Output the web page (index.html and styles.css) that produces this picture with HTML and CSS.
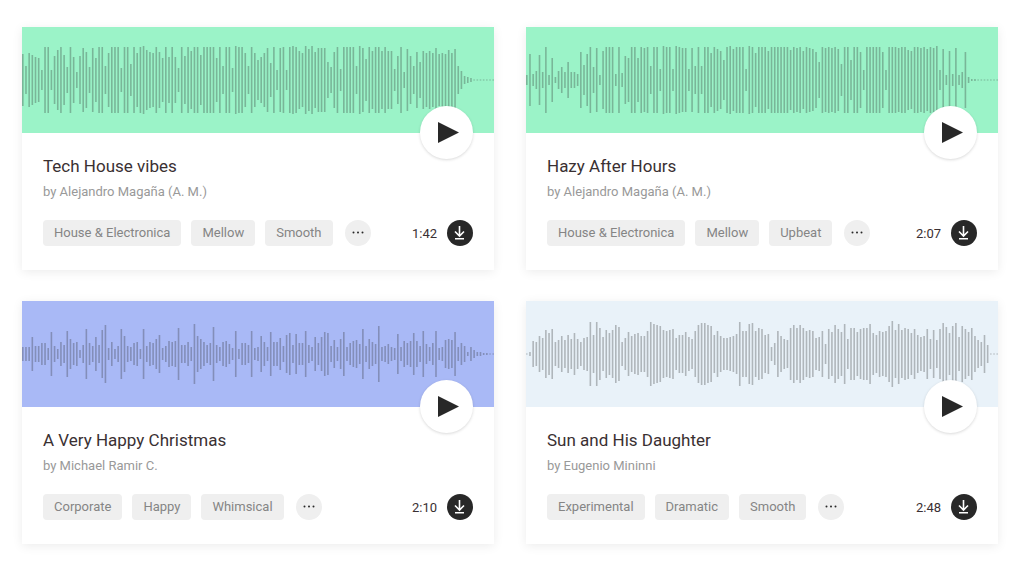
FILE: index.html
```html
<!DOCTYPE html>
<html lang="en">
<head>
    <meta charset="UTF-8">
    <meta name="viewport" content="width=device-width, initial-scale=1.0">
    <title>Free Stock Music</title>
    <link rel="stylesheet" href="styles.css">
</head>
<body>
    <svg width="0" height="0" class="icon-defs" aria-hidden="true">
        <symbol id="icon-play" viewBox="0 0 21 21">
            <path d="M0 0 L21 10.5 L0 21 Z" fill="currentColor"/>
        </symbol>
        <symbol id="icon-more" viewBox="0 0 26 26">
            <circle cx="8.5" cy="12.5" r="1" fill="currentColor"/>
            <circle cx="13" cy="12.5" r="1" fill="currentColor"/>
            <circle cx="17.5" cy="12.5" r="1" fill="currentColor"/>
        </symbol>
        <symbol id="icon-download" viewBox="0 0 26 26">
            <path d="M12.5 6 V15.5 M8 11.5 L12.5 16 L17 11.5 M8 18.8 H17" fill="none" stroke="currentColor" stroke-width="1.6"/>
        </symbol>
    </svg>

    <main class="track-grid">
        <article class="track-card">
            <div class="track-wave wave-green">
                <svg class="wave" data-track="techHouse" viewBox="0 0 297 106" preserveAspectRatio="none" aria-hidden="true"></svg>
                <button class="play-button" type="button" aria-label="Play Tech House vibes"><svg><use href="#icon-play"/></svg></button>
            </div>
            <div class="track-content">
                <h2 class="track-title">Tech House vibes</h2>
                <p class="track-artist">by Alejandro Magaña (A. M.)</p>
                <div class="track-footer">
                    <div class="tags">
                        <a class="tag" href="#house-electronica">House &amp; Electronica</a>
                        <a class="tag" href="#mellow">Mellow</a>
                        <a class="tag" href="#smooth">Smooth</a>
                        <button class="more-button" type="button" aria-label="More tags"><svg><use href="#icon-more"/></svg></button>
                    </div>
                    <span class="duration">1:42</span>
                    <a class="download" href="#download-tech-house" aria-label="Download Tech House vibes"><svg><use href="#icon-download"/></svg></a>
                </div>
            </div>
        </article>

        <article class="track-card">
            <div class="track-wave wave-green">
                <svg class="wave" data-track="hazyHours" viewBox="0 0 297 106" preserveAspectRatio="none" aria-hidden="true"></svg>
                <button class="play-button" type="button" aria-label="Play Hazy After Hours"><svg><use href="#icon-play"/></svg></button>
            </div>
            <div class="track-content">
                <h2 class="track-title">Hazy After Hours</h2>
                <p class="track-artist">by Alejandro Magaña (A. M.)</p>
                <div class="track-footer">
                    <div class="tags">
                        <a class="tag" href="#house-electronica">House &amp; Electronica</a>
                        <a class="tag" href="#mellow">Mellow</a>
                        <a class="tag" href="#upbeat">Upbeat</a>
                        <button class="more-button" type="button" aria-label="More tags"><svg><use href="#icon-more"/></svg></button>
                    </div>
                    <span class="duration">2:07</span>
                    <a class="download" href="#download-hazy-hours" aria-label="Download Hazy After Hours"><svg><use href="#icon-download"/></svg></a>
                </div>
            </div>
        </article>

        <article class="track-card">
            <div class="track-wave wave-blue">
                <svg class="wave" data-track="christmas" viewBox="0 0 297 106" preserveAspectRatio="none" aria-hidden="true"></svg>
                <button class="play-button" type="button" aria-label="Play A Very Happy Christmas"><svg><use href="#icon-play"/></svg></button>
            </div>
            <div class="track-content">
                <h2 class="track-title">A Very Happy Christmas</h2>
                <p class="track-artist">by Michael Ramir C.</p>
                <div class="track-footer">
                    <div class="tags">
                        <a class="tag" href="#corporate">Corporate</a>
                        <a class="tag" href="#happy">Happy</a>
                        <a class="tag" href="#whimsical">Whimsical</a>
                        <button class="more-button" type="button" aria-label="More tags"><svg><use href="#icon-more"/></svg></button>
                    </div>
                    <span class="duration">2:10</span>
                    <a class="download" href="#download-christmas" aria-label="Download A Very Happy Christmas"><svg><use href="#icon-download"/></svg></a>
                </div>
            </div>
        </article>

        <article class="track-card">
            <div class="track-wave wave-pale">
                <svg class="wave" data-track="sunDaughter" viewBox="0 0 297 106" preserveAspectRatio="none" aria-hidden="true"></svg>
                <button class="play-button" type="button" aria-label="Play Sun and His Daughter"><svg><use href="#icon-play"/></svg></button>
            </div>
            <div class="track-content">
                <h2 class="track-title">Sun and His Daughter</h2>
                <p class="track-artist">by Eugenio Mininni</p>
                <div class="track-footer">
                    <div class="tags">
                        <a class="tag" href="#experimental">Experimental</a>
                        <a class="tag" href="#dramatic">Dramatic</a>
                        <a class="tag" href="#smooth">Smooth</a>
                        <button class="more-button" type="button" aria-label="More tags"><svg><use href="#icon-more"/></svg></button>
                    </div>
                    <span class="duration">2:48</span>
                    <a class="download" href="#download-sun-daughter" aria-label="Download Sun and His Daughter"><svg><use href="#icon-download"/></svg></a>
                </div>
            </div>
        </article>
    </main>

    <script src="script.js"></script>
</body>
</html>
```

FILE: styles.css
```css
:root {
    --text-dark: #3a3032;
    --text-light: #999999;
    --tag-bg: #efefef;
    --icon-dark: #282828;
}

* {
    margin: 0;
    padding: 0;
    box-sizing: border-box;
}

body {
    background-color: #ffffff;
    color: var(--text-dark);
    font-family: Roboto, 'Liberation Sans', sans-serif;
    font-size: 13px;
}

a {
    color: inherit;
    text-decoration: none;
}

button {
    border: none;
    font: inherit;
    cursor: pointer;
}

.icon-defs {
    position: absolute;
}

.track-grid {
    display: grid;
    grid-template-columns: repeat(2, minmax(0, 1fr));
    gap: 31px 32px;
    padding: 27px 26px 27px 22px;
}

.track-card {
    background: #ffffff;
    box-shadow: 0 2px 10px rgba(0, 0, 0, 0.08);
}

.track-wave {
    position: relative;
    height: 106px;
}

.wave-green {
    background: #9bf3c8;
}

.wave-blue {
    background: #a9b9f6;
}

.wave-pale {
    background: #e9f2f9;
}

.wave {
    display: block;
    width: 100%;
    height: 100%;
    fill: #2b2b2b;
    fill-opacity: 0.3;
}

.play-button {
    position: absolute;
    right: 21px;
    bottom: -26px;
    width: 53px;
    height: 53px;
    padding-left: 18px;
    border-radius: 50%;
    background: #ffffff;
    color: var(--icon-dark);
    box-shadow: 0 1px 3px rgba(0, 0, 0, 0.15);
}

.play-button svg {
    display: block;
    width: 21px;
    height: 21px;
}

.track-content {
    padding: 21px 21px 24px;
}

.track-title {
    font-size: 17px;
    font-weight: 400;
    line-height: 24px;
}

.track-artist {
    margin-top: 4px;
    color: var(--text-light);
    line-height: 20px;
}

.track-footer {
    display: flex;
    align-items: center;
    margin-top: 18px;
}

.tags {
    display: flex;
    flex: 1;
    gap: 10px;
}

.tag {
    padding: 0 11px;
    border-radius: 4px;
    background: var(--tag-bg);
    color: #858585;
    line-height: 26px;
}

.more-button {
    width: 26px;
    height: 26px;
    margin-left: 2px;
    border-radius: 50%;
    background: var(--tag-bg);
    color: var(--icon-dark);
}

.more-button svg,
.download svg {
    display: block;
    width: 26px;
    height: 26px;
}

.duration {
    margin-right: 10px;
}

.download {
    border-radius: 50%;
    background: var(--icon-dark);
    color: #ffffff;
}

@media (max-width: 768px) {
    .track-grid {
        grid-template-columns: 1fr;
    }
}
```

FILE: script.js
```js
// Peak heights for each track, measured from the middle of the wave
const peaks = {
    techHouse: [
        26, 14, 27, 25, 23, 22, 10, 33, 33, 10, 24, 30, 33, 25, 13, 33, 23, 8, 24, 32, 28, 13, 32, 22, 33,
        33, 14, 27, 33, 33, 33, 12, 33, 33, 16, 33, 27, 33, 34, 30, 28, 27, 33, 28, 22, 33, 23, 33, 23, 12,
        33, 24, 33, 29, 33, 33, 25, 33, 33, 33, 33, 22, 33, 14, 33, 33, 12, 34, 33, 33, 27, 14, 33, 27, 20,
        23, 27, 32, 17, 33, 10, 32, 33, 10, 33, 34, 33, 29, 27, 34, 31, 34, 28, 32, 32, 32, 18, 13, 28, 33,
        11, 33, 33, 33, 33, 14, 34, 32, 21, 33, 29, 33, 33, 29, 33, 29, 29, 11, 24, 33, 8, 31, 24, 14, 28,
        18, 29, 27, 29, 27, 32, 26, 27, 26, 30, 27, 31, 14, 9, 4, 3, 2, 0, 0, 0, 0, 0, 0, 0
    ],
    hazyHours: [
        5, 26, 6, 9, 25, 8, 33, 5, 22, 3, 9, 13, 8, 18, 8, 8, 6, 28, 15, 26, 33, 13, 32, 5, 29,
        33, 33, 33, 6, 33, 7, 24, 22, 33, 33, 22, 33, 32, 33, 14, 33, 33, 11, 34, 33, 33, 11, 34, 33, 32,
        32, 11, 32, 14, 33, 14, 33, 33, 27, 33, 31, 29, 20, 33, 34, 31, 33, 33, 33, 11, 34, 33, 27, 33, 33,
        33, 29, 33, 33, 33, 33, 33, 33, 30, 33, 32, 33, 29, 33, 32, 31, 28, 18, 33, 32, 33, 32, 33, 31, 16,
        33, 33, 20, 33, 33, 28, 10, 33, 33, 33, 33, 33, 28, 10, 33, 33, 33, 32, 33, 33, 30, 29, 33, 33, 32,
        33, 31, 33, 32, 34, 10, 31, 5, 29, 6, 32, 5, 8, 28, 3, 1, 1, 0, 0, 0, 0, 0, 0, 0
    ],
    christmas: [
        7, 7, 7, 17, 8, 8, 11, 11, 6, 22, 8, 5, 12, 9, 23, 15, 11, 12, 4, 9, 25, 11, 8, 17, 9,
        24, 29, 6, 12, 5, 8, 25, 18, 8, 7, 11, 12, 5, 25, 8, 12, 11, 15, 19, 6, 8, 13, 12, 13, 26,
        9, 9, 12, 7, 30, 18, 15, 12, 9, 11, 27, 9, 7, 12, 13, 10, 6, 23, 5, 11, 11, 9, 23, 6, 7,
        18, 12, 7, 22, 12, 12, 16, 8, 19, 21, 9, 20, 11, 11, 23, 9, 7, 17, 11, 17, 22, 21, 8, 14, 7,
        15, 22, 7, 11, 13, 14, 10, 25, 8, 15, 12, 10, 28, 7, 8, 10, 7, 6, 20, 7, 13, 11, 13, 21, 13,
        8, 23, 10, 7, 11, 23, 6, 7, 14, 15, 14, 22, 7, 11, 8, 2, 7, 4, 2, 2, 1, 1, 0, 0
    ],
    sunDaughter: [
        0, 2, 13, 12, 18, 16, 24, 21, 25, 12, 14, 18, 14, 19, 15, 21, 15, 12, 16, 17, 32, 19, 32, 26, 17,
        24, 21, 24, 29, 27, 12, 16, 22, 18, 20, 21, 18, 18, 23, 32, 30, 29, 28, 24, 23, 24, 25, 16, 19, 19,
        22, 17, 15, 23, 29, 31, 31, 29, 28, 19, 23, 18, 16, 16, 17, 18, 20, 32, 23, 23, 30, 31, 23, 26, 25,
        19, 20, 7, 11, 23, 18, 15, 14, 26, 29, 26, 29, 26, 23, 24, 23, 16, 17, 23, 10, 25, 22, 29, 25, 22,
        30, 15, 26, 26, 22, 25, 26, 26, 30, 21, 19, 23, 22, 23, 28, 33, 24, 30, 24, 26, 25, 21, 25, 19, 17,
        18, 25, 15, 24, 14, 25, 31, 27, 21, 28, 31, 17, 28, 25, 22, 26, 18, 14, 12, 19, 9, 0, 0, 0
    ]
};

// One bar and one gap per peak, silent parts become a dot
function drawWave(svg) {
    const path = document.createElementNS('http://www.w3.org/2000/svg', 'path');
    const bars = peaks[svg.dataset.track].map((peak, i) => {
        const half = peak || 0.5;
        return `M${i * 2} ${53 - half}h1v${half * 2}h-1z`;
    });
    path.setAttribute('d', bars.join(''));
    svg.appendChild(path);
}

document.querySelectorAll('.wave').forEach(drawWave);
```
